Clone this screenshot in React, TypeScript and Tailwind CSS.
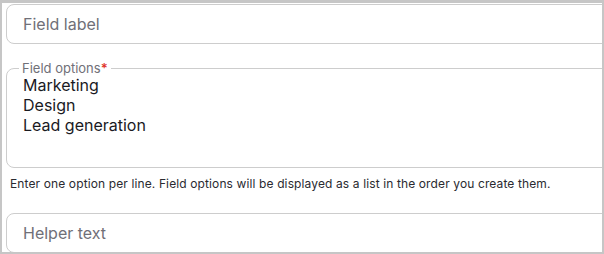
export default function App() {
  return (
    <div
      className="w-[604px] h-[254px] bg-[#c6c6c6] pl-[2px] pr-[2px] pt-[3px] pb-[2px]"
      style={{ fontFamily: "Inter, 'Noto Sans', sans-serif" }}
    >
      <div className="bg-white h-full overflow-hidden pl-1 pt-[1px]">
        {/* Field label */}
        <div className="w-[620px] h-10 border border-[#cdcdcd] rounded-lg flex items-center pl-4 text-[16px] text-[#707078]">
          Field label
        </div>

        {/* Field options */}
        <fieldset className="w-[620px] mt-4 h-[108px] border border-[#cdcdcd] rounded-lg px-3 pb-2">
          <legend className="px-[3px] text-[13px] leading-4 text-[#707078]">
            Field options<span className="text-[#e0352b] font-semibold">*</span>
          </legend>
          <div className="pl-1 -mt-[1px] text-[16px] leading-5 text-[#1a1a1f]">
            <div>Marketing</div>
            <div>Design</div>
            <div>Lead generation</div>
          </div>
        </fieldset>
        <p className="mt-2 pl-[4px] text-[12px] tracking-[0.12px] leading-4 text-[#2a2a30]">
          Enter one option per line. Field options will be displayed as a list in the order you create them.
        </p>

        {/* Helper text */}
        <div className="w-[620px] mt-[21px] h-10 border border-[#cdcdcd] rounded-lg flex items-center pl-4 text-[16px] text-[#707078]">
          Helper text
        </div>
      </div>
    </div>
  );
}
